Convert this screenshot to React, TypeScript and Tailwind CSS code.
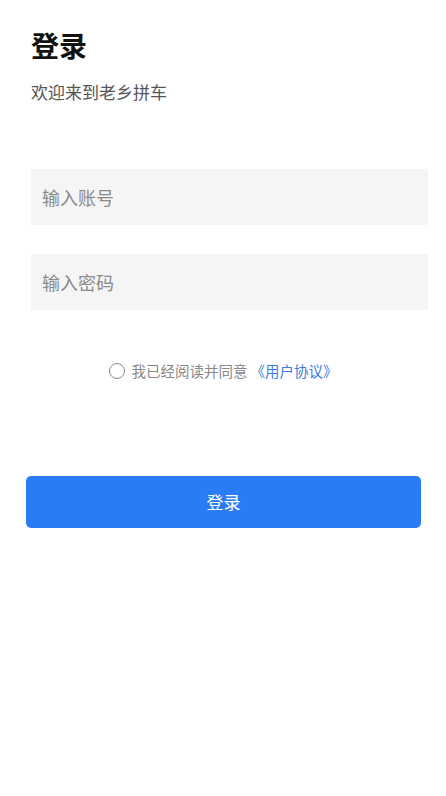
import { useState } from "react";

const font = "font-['Noto_Sans_CJK_SC','Noto_Sans',sans-serif]";

export default function App() {
  const [agreed, setAgreed] = useState(false);

  return (
    <div className={`min-h-[796px] w-full bg-white ${font}`}>
      <div className="pl-[31px] pt-[28px]">
        <h1 className="text-[28px] font-bold leading-[34px] text-[#111]">登录</h1>
        <p className="mt-[18px] text-[17px] leading-[24px] text-[#555]">欢迎来到老乡拼车</p>
      </div>

      <div className="ml-[31px] mr-[18px] mt-[65px] flex flex-col gap-[29px]">
        <input
          className="h-[56px] w-full bg-[#f5f5f5] pl-[11px] text-[18px] text-[#333] outline-none placeholder:text-[#8a8a8a]"
          placeholder="输入账号"
        />
        <input
          type="password"
          className="h-[56px] w-full bg-[#f5f5f5] pl-[11px] text-[18px] text-[#333] outline-none placeholder:text-[#8a8a8a]"
          placeholder="输入密码"
        />
      </div>

      <div className="mt-[50px] flex h-[22px] items-center justify-center text-[14.5px]">
        <button
          onClick={() => setAgreed(!agreed)}
          className={`mr-[7px] h-[16px] w-[16px] rounded-full border-[1.5px] ${agreed ? "border-[#2a7cf6] bg-[#2a7cf6]" : "border-[#8a8a8a]"}`}
        />
        <span className="text-[#888]">我已经阅读并同意</span>
        <span className="ml-[3px] text-[#3b7de0]">《用户协议》</span>
      </div>

      <div className="ml-[26px] mr-[25px] mt-[94px]">
        <button className="h-[52px] w-full rounded-[5px] bg-[#2a7cf6] text-[17px] text-white">登录</button>
      </div>
    </div>
  );
}
